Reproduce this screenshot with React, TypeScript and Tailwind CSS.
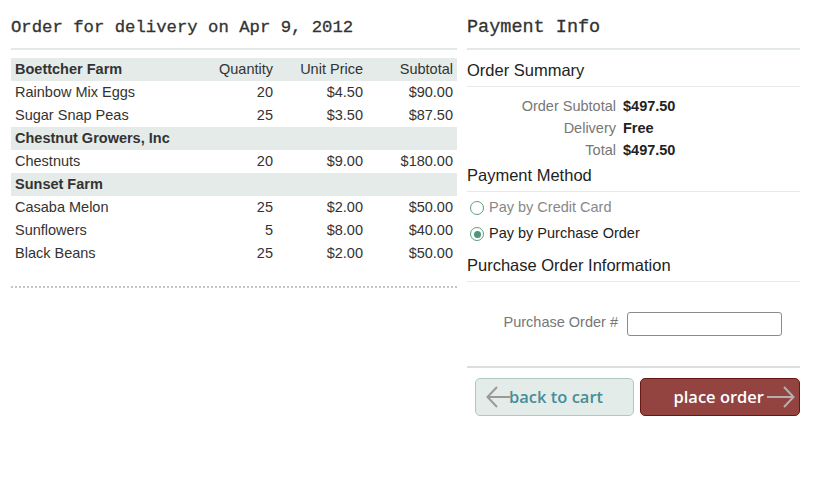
import { Fragment } from "react";

const farms = [
  {
    name: "Boettcher Farm",
    items: [
      { name: "Rainbow Mix Eggs", qty: 20, price: "$4.50", subtotal: "$90.00" },
      { name: "Sugar Snap Peas", qty: 25, price: "$3.50", subtotal: "$87.50" },
    ],
  },
  {
    name: "Chestnut Growers, Inc",
    items: [{ name: "Chestnuts", qty: 20, price: "$9.00", subtotal: "$180.00" }],
  },
  {
    name: "Sunset Farm",
    items: [
      { name: "Casaba Melon", qty: 25, price: "$2.00", subtotal: "$50.00" },
      { name: "Sunflowers", qty: 5, price: "$8.00", subtotal: "$40.00" },
      { name: "Black Beans", qty: 25, price: "$2.00", subtotal: "$50.00" },
    ],
  },
];

function Radio({ checked }: { checked?: boolean }) {
  return (
    <span className="flex h-[14px] w-[14px] items-center justify-center rounded-full border-[1.5px] border-[#5a9f80] bg-white">
      {checked && <span className="h-[7px] w-[7px] rounded-full bg-[#4f9577]" />}
    </span>
  );
}

function ArrowLeft() {
  return (
    <svg width="24" height="22" viewBox="0 0 24 22" fill="none" stroke="#999" strokeWidth="2">
      <path d="M2 11 H24" />
      <path d="M11 1 L1.5 11 L11 21" />
    </svg>
  );
}

function ArrowRight() {
  return (
    <svg width="28" height="22" viewBox="0 0 28 22" fill="none" stroke="#b5b0ae" strokeWidth="2">
      <path d="M0 11 H26" />
      <path d="M17 1 L26.5 11 L17 21" />
    </svg>
  );
}

export default function App() {
  return (
    <div className="flex min-h-[498px] w-[824px] gap-[10px] bg-white pl-[11px] font-['Liberation_Sans',Arial,sans-serif] text-[#333]">
      <div className="w-[446px]">
        <h1 className="border-b-2 border-[#e3e9e6] pt-[16px] pb-[8px] font-['Liberation_Mono','Courier_New',monospace] text-[17.3px] leading-[24px] text-[#333] [-webkit-text-stroke:0.3px_#333]">
          Order for delivery on Apr 9, 2012
        </h1>
        <table className="mt-[8px] w-full border-collapse text-[14.5px]">
          <colgroup>
            <col className="w-[186px]" />
            <col className="w-[80px]" />
            <col className="w-[90px]" />
            <col className="w-[90px]" />
          </colgroup>
          <tbody>
            {farms.map((farm, i) => (
              <Fragment key={farm.name}>
                <tr className="h-[23px] bg-[#e4ebe8]">
                  <td className="pl-[4px] font-bold">{farm.name}</td>
                  {i === 0 ? (
                    <>
                      <td className="pr-[4px] text-right">Quantity</td>
                      <td className="pr-[4px] text-right">Unit Price</td>
                      <td className="pr-[4px] text-right">Subtotal</td>
                    </>
                  ) : (
                    <td colSpan={3} />
                  )}
                </tr>
                {farm.items.map((item) => (
                  <tr key={item.name} className="h-[23px]">
                    <td className="pl-[4px]">{item.name}</td>
                    <td className="pr-[4px] text-right">{item.qty}</td>
                    <td className="pr-[4px] text-right">{item.price}</td>
                    <td className="pr-[4px] text-right">{item.subtotal}</td>
                  </tr>
                ))}
              </Fragment>
            ))}
          </tbody>
        </table>
        <div className="mt-[21px] border-t-2 border-dotted border-[#c4c4c4]" />
      </div>

      <div className="w-[333px]">
        <h2 className="border-b-2 border-[#e3e9e6] pt-[16px] pb-[8px] font-['Liberation_Mono','Courier_New',monospace] text-[18.5px] leading-[24px] text-[#333] [-webkit-text-stroke:0.3px_#333]">
          Payment Info
        </h2>
        <h3 className="border-b border-[#e6ebe9] pt-[10px] pb-[6px] text-[16.5px] leading-[20px] text-[#222]">
          Order Summary
        </h3>
        <div className="mt-[8px] grid grid-cols-[149px_1fr] gap-x-[7px] text-[14.5px] leading-[22px]">
          <span className="text-right text-[#777]">Order Subtotal</span>
          <span className="font-bold text-[#222]">$497.50</span>
          <span className="text-right text-[#777]">Delivery</span>
          <span className="font-bold text-[#222]">Free</span>
          <span className="text-right text-[#777]">Total</span>
          <span className="font-bold text-[#222]">$497.50</span>
        </div>
        <h3 className="border-b border-[#e6ebe9] pt-[4px] pb-[6px] text-[16.5px] leading-[20px] text-[#222]">
          Payment Method
        </h3>
        <div className="mt-[3px] text-[14.5px]">
          <label className="flex h-[26px] items-center gap-[5px] pl-[3px] text-[#888]">
            <Radio />
            Pay by Credit Card
          </label>
          <label className="flex h-[26px] items-center gap-[5px] pl-[3px] text-[#222]">
            <Radio checked />
            Pay by Purchase Order
          </label>
        </div>
        <h3 className="border-b border-[#e6ebe9] pt-[8px] pb-[6px] text-[16.5px] leading-[20px] text-[#222]">
          Purchase Order Information
        </h3>
        <div className="mt-[30px] flex items-center gap-[9px]">
          <label className="mb-[4px] w-[151px] text-right text-[14.5px] leading-[18px] text-[#777]">Purchase Order #</label>
          <input
            type="text"
            className="h-[24px] w-[155px] rounded-[3px] border border-[#8a8a8a] bg-white px-1 text-[14px] outline-none"
          />
        </div>
        <div className="mt-[30px] border-t-2 border-[#dddddd]" />
        <div className="mt-[10px] flex gap-[6px] pl-[8px]">
          <button className="flex h-[38px] w-[159px] items-center rounded-[5px] border border-[#b0c8bf] bg-[#e4ece9] pl-[10px] font-['Open_Sans',sans-serif] text-[16.5px] font-semibold text-[#4a8d94]">
            <ArrowLeft />
            <span className="-ml-[1px]">back to cart</span>
          </button>
          <button className="flex h-[38px] w-[160px] items-center justify-end gap-[3px] rounded-[5px] border border-[#6a1612] bg-[#934340] pr-[4px] font-['Open_Sans',sans-serif] text-[16.5px] font-semibold text-white">
            <span>place order</span>
            <ArrowRight />
          </button>
        </div>
      </div>
    </div>
  );
}
